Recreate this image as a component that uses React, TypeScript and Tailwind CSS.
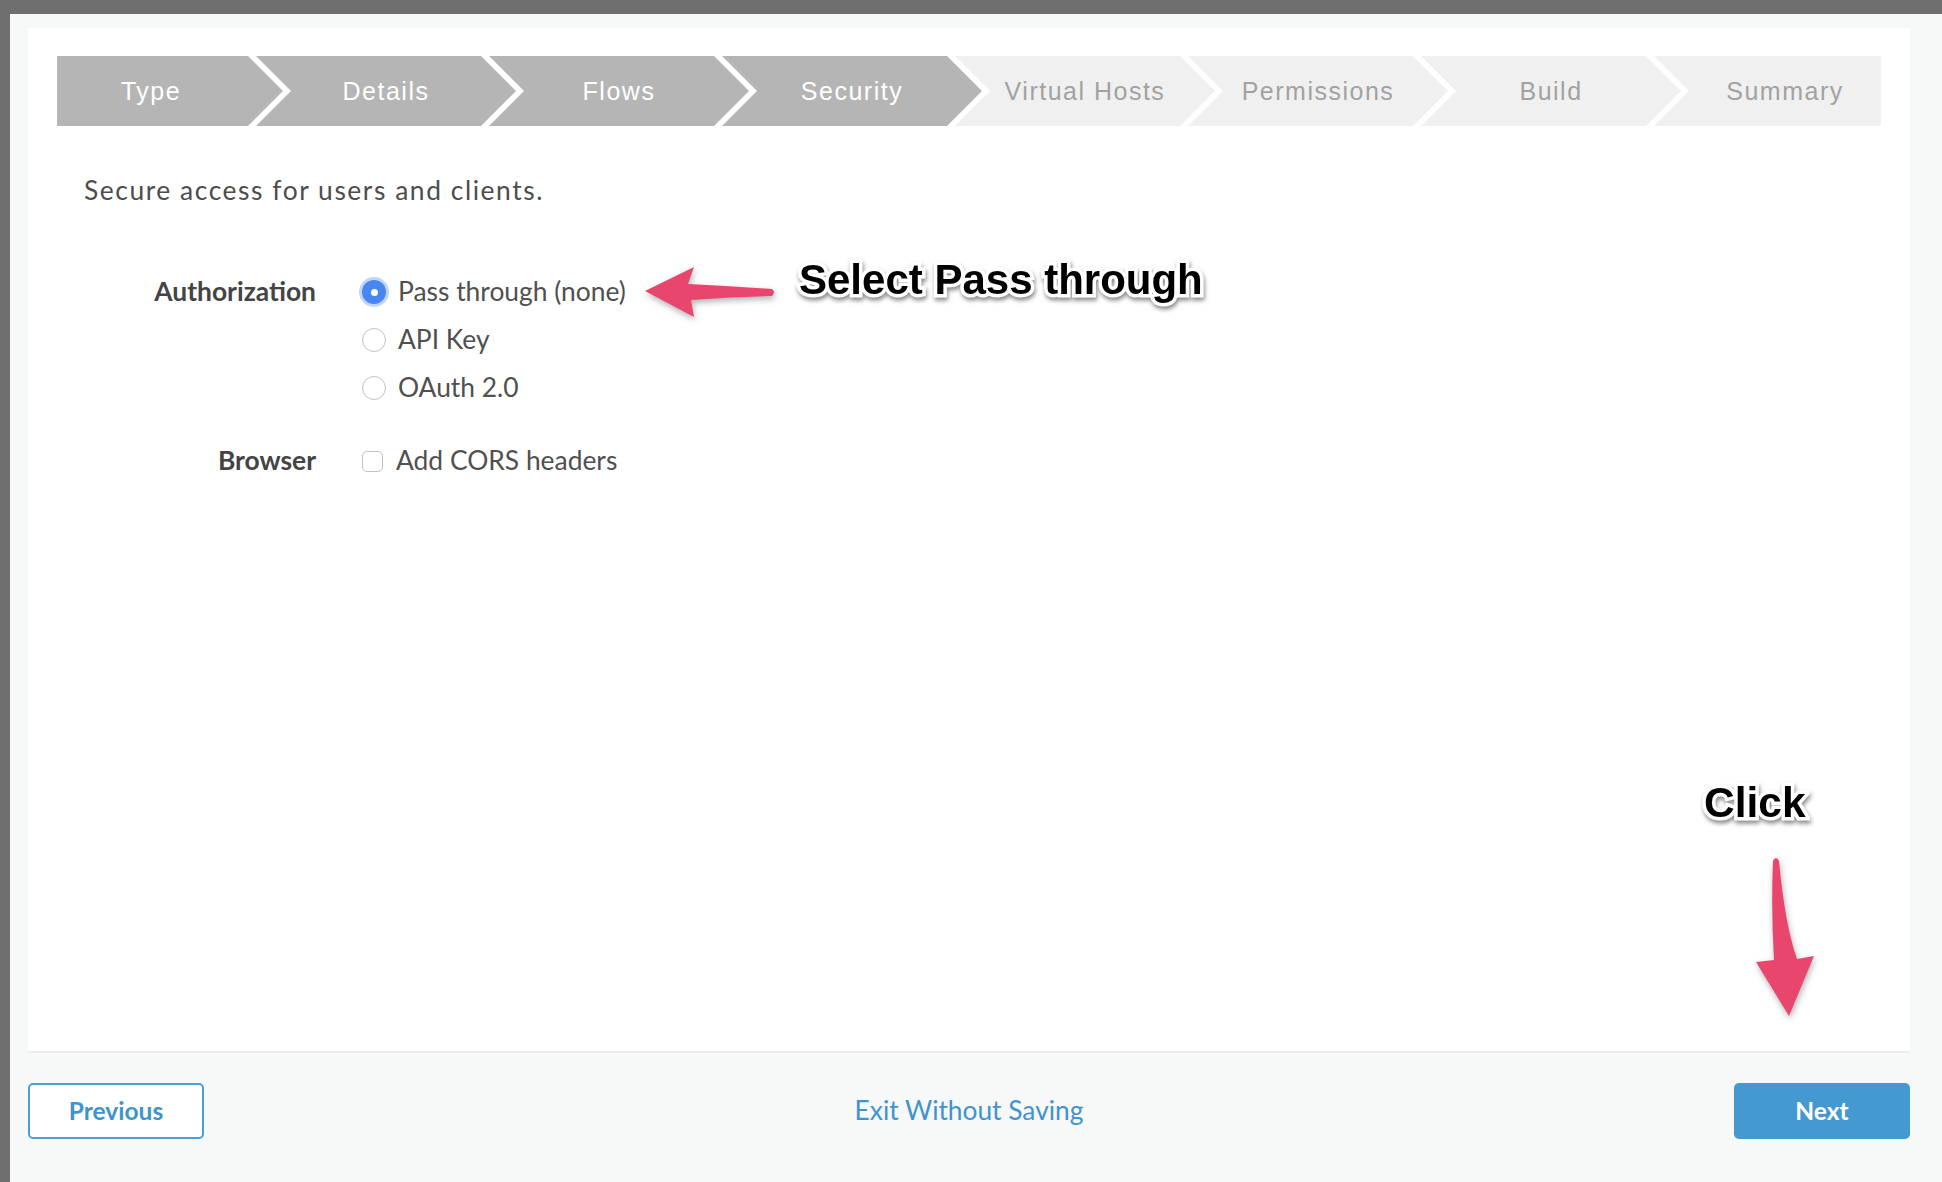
import React from "react";

const steps = [
  { label: "Type", done: true },
  { label: "Details", done: true },
  { label: "Flows", done: true },
  { label: "Security", done: true },
  { label: "Virtual Hosts", done: false },
  { label: "Permissions", done: false },
  { label: "Build", done: false },
  { label: "Summary", done: false },
];

const lato = "font-['Lato','Noto_Sans',sans-serif]";

function Stepper() {
  return (
    <div className="flex h-[70px] font-['Liberation_Sans',Arial,sans-serif] text-[25px] tracking-[1.5px]">
      {steps.map((step, i) => {
        const first = i === 0;
        const last = i === steps.length - 1;
        let shape =
          "w-[260px] -ml-[27px] [clip-path:polygon(0_0,calc(100%_-_35px)_0,100%_50%,calc(100%_-_35px)_100%,0_100%,35px_50%)]";
        if (first) {
          shape =
            "w-[226px] pr-[38px] [clip-path:polygon(0_0,calc(100%_-_35px)_0,100%_50%,calc(100%_-_35px)_100%,0_100%)]";
        } else if (last) {
          shape = "flex-1 -ml-[27px] pl-[35px] [clip-path:polygon(0_0,100%_0,100%_100%,0_100%,35px_50%)]";
        }
        return (
          <div
            key={step.label}
            className={`${shape} shrink-0 flex items-center justify-center pt-[2px] ${
              step.done ? "bg-[#b5b5b5] text-white" : "bg-[#f0f0f0] text-[#a2a2a2]"
            }`}
          >
            {step.label}
          </div>
        );
      })}
    </div>
  );
}

function Radio({ checked, label }: { checked?: boolean; label: string }) {
  return (
    <div className="h-[48px] flex items-center gap-[12px]">
      {checked ? (
        <span className="w-[24px] h-[24px] rounded-full bg-[#4a86f0] ring-[3px] ring-[#4a86f0]/35 flex items-center justify-center">
          <span className="w-[7px] h-[7px] rounded-full bg-white" />
        </span>
      ) : (
        <span className="w-[24px] h-[24px] rounded-full border border-[#c2c2c2] bg-white" />
      )}
      <span>{label}</span>
    </div>
  );
}

export default function App() {
  return (
    <div className="relative min-h-screen bg-[#6f6f6f] pl-[10px] pt-[14px] overflow-hidden">
      <div className="bg-[#f7f8f8] min-h-[1168px] pl-[18px] pr-[32px] pt-[14px]">
        {/* Card */}
        <div className="bg-white border-b-2 border-[#ececec] h-[1025px] px-[29px] pt-[28px]">
          <Stepper />

          <p className={`${lato} mt-[46px] pl-[27px] h-[36px] leading-[36px] text-[26.4px] tracking-[1.55px] text-[#4d4d4d]`}>
            Secure access for users and clients.
          </p>

          <div className={`${lato} mt-[60px] grid grid-cols-[259px_1fr] gap-x-[46px] text-[26.4px] text-[#505050]`}>
            <div className="h-[48px] flex items-center justify-end font-bold text-[#444]">Authorization</div>
            <div>
              <Radio checked label="Pass through (none)" />
              <Radio label="API Key" />
              <Radio label="OAuth 2.0" />
            </div>

            <div className="mt-[25px] h-[48px] flex items-center justify-end font-bold text-[#444]">Browser</div>
            <div className="mt-[25px] h-[48px] flex items-center gap-[13px]">
              <span className="w-[21px] h-[21px] rounded-[5px] border border-[#c2c2c2] bg-white" />
              <span>Add CORS headers</span>
            </div>
          </div>
        </div>

        {/* Footer */}
        <div className={`${lato} pt-[30px] flex items-center justify-between text-[24.5px]`}>
          <button className="w-[176px] h-[56px] rounded-[5px] border-2 border-[#4a9fd8] bg-white font-bold text-[#3f93cf]">
            Previous
          </button>
          <a className="text-[#3f93cf] text-[26.3px]">Exit Without Saving</a>
          <button className="w-[176px] h-[56px] rounded-[5px] bg-[#4499d0] font-bold text-white">Next</button>
        </div>
      </div>

      {/* Annotation overlay */}
      <svg
        className="absolute left-0 top-0 w-[1942px] h-[1182px] pointer-events-none [filter:drop-shadow(1px_3px_3px_rgba(0,0,0,0.3))]"
        viewBox="0 0 1942 1182"
      >
        <path
          d="M645 291 L694 267 L688 284 Q730 286 772 289 Q776 292 772 296 Q730 297 691 300 L694 317 Z"
          fill="#e9466e"
        />
        <path
          d="M1773 861 Q1776 855 1779 861 Q1785 925 1797 959 L1814 956 L1789 1016 L1756 962 L1774 960 Q1771 910 1773 861 Z"
          fill="#e9466e"
        />
      </svg>
      <div className="absolute left-[799px] top-[259px] font-['Liberation_Sans',Arial,sans-serif] font-bold text-[42px] leading-none text-black [paint-order:stroke_fill] [-webkit-text-stroke:7px_white] [filter:drop-shadow(1px_3px_2px_rgba(0,0,0,0.45))] whitespace-nowrap">
        Select Pass through
      </div>
      <div className="absolute left-[1704px] top-[782px] font-['Liberation_Sans',Arial,sans-serif] font-bold text-[42.5px] leading-none text-black [paint-order:stroke_fill] [-webkit-text-stroke:7px_white] [filter:drop-shadow(1px_3px_2px_rgba(0,0,0,0.45))]">
        Click
      </div>
    </div>
  );
}
